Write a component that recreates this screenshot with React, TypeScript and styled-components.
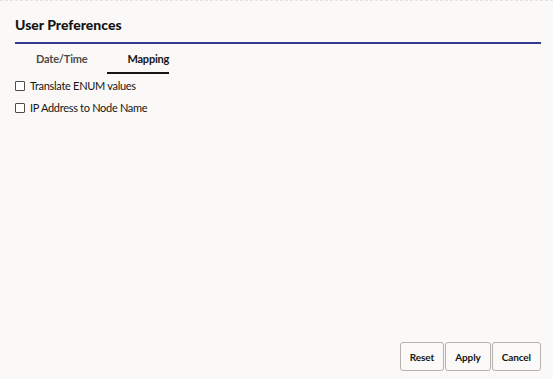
import styled, { createGlobalStyle } from "styled-components";
import { useState } from "react";

const GlobalStyle = createGlobalStyle`
  html, body {
    margin: 0;
    padding: 0;
    background: #faf9f8;
  }
  body {
    font-family: Lato, "Noto Sans", sans-serif;
    color: #161513;
  }
`;

const tabs = ["Date/Time", "Mapping"];
const options = ["Translate ENUM values", "IP Address to Node Name"];

const App = () => {
  const [active, setActive] = useState("Mapping");
  const [checked, setChecked] = useState<Record<string, boolean>>({});

  return (
    <>
      <GlobalStyle />
      <Page>
        <Header>
          <Title>User Preferences</Title>
        </Header>
        <TabBar>
          {tabs.map((t) => (
            <Tab key={t} $active={t === active} onClick={() => setActive(t)}>
              {t}
            </Tab>
          ))}
        </TabBar>
        <Options>
          {options.map((o) => (
            <OptionRow key={o}>
              <Box
                type="checkbox"
                checked={!!checked[o]}
                onChange={() => setChecked({ ...checked, [o]: !checked[o] })}
              />
              {o}
            </OptionRow>
          ))}
        </Options>
        <Footer>
          <Button>Reset</Button>
          <Button>Apply</Button>
          <Button>Cancel</Button>
        </Footer>
      </Page>
    </>
  );
};
export default App;

const Page = styled.div`
  height: 379px;
  box-sizing: border-box;
  border-top: 1px dashed #e6e4e1;
  display: flex;
  flex-direction: column;
  padding: 0 12px 0 15px;
`;
const Header = styled.div`
  height: 43px;
  box-sizing: border-box;
  border-bottom: 2px solid #353a93;
  display: flex;
  align-items: flex-end;
  padding-bottom: 8px;
`;
const Title = styled.h1`
  margin: 0;
  font-size: 14px;
  font-weight: 900;
  line-height: 18px;
`;
const TabBar = styled.div`
  display: flex;
  height: 30px;
`;
const Tab = styled.div<{ $active: boolean }>`
  display: flex;
  align-items: center;
  padding-left: 20px;
  margin-left: ${(p) => (p.$active ? "20px" : "1px")};
  font-size: 11px;
  font-weight: 700;
  letter-spacing: -0.2px;
  color: ${(p) => (p.$active ? "#161513" : "#4f4b47")};
  border-bottom: 2px solid ${(p) => (p.$active ? "#161513" : "transparent")};
  cursor: pointer;
`;
const Options = styled.div`
  display: flex;
  flex-direction: column;
  gap: 5px;
  padding-top: 3px;
  flex: 1;
`;
const OptionRow = styled.label`
  display: flex;
  align-items: center;
  gap: 5px;
  height: 17px;
  font-size: 11px;
  letter-spacing: -0.3px;
  color: #161513;
`;
const Box = styled.input`
  appearance: none;
  margin: 0;
  width: 10px;
  height: 10px;
  border: 1px solid #4f4b47;
  border-radius: 1px;
  background: #fff;
`;
const Footer = styled.div`
  display: flex;
  justify-content: flex-end;
  gap: 1px;
  padding-bottom: 8px;
`;
const Button = styled.button`
  height: 29px;
  padding: 0 9px;
  font-family: Lato, "Noto Sans", sans-serif;
  font-size: 10px;
  font-weight: 700;
  letter-spacing: -0.1px;
  color: #161513;
  background: #fbfaf9;
  border: 1px solid #b5b2ae;
  border-radius: 3px;
`;
